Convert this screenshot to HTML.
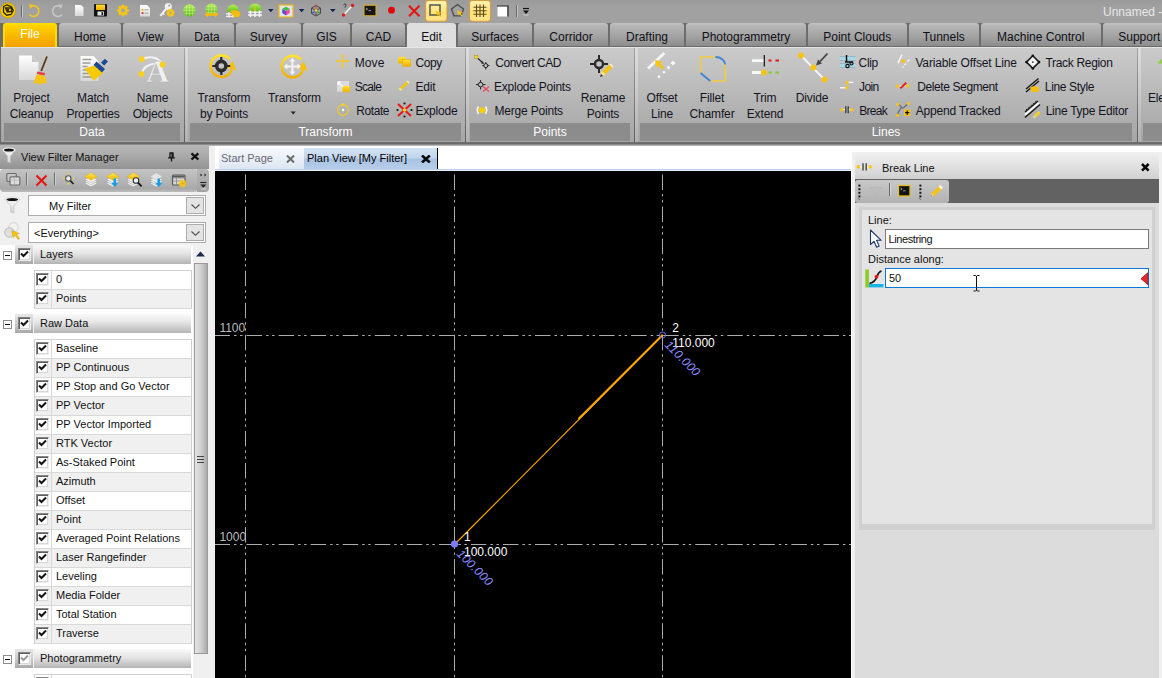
<!DOCTYPE html>
<html><head><meta charset="utf-8"><title>Break Line</title>
<style>
html,body{margin:0;padding:0;}
body{width:1162px;height:678px;overflow:hidden;position:relative;background:#a1a1a1;font-family:"Liberation Sans",sans-serif;font-size:12px;color:#111;}
.a{position:absolute;}
.t{position:absolute;white-space:nowrap;line-height:14px;}
/* title bar */
#title{left:0;top:0;width:1162px;height:23px;background:linear-gradient(#9a9a9a,#a1a1a1 35%,#a1a1a1);}
/* tab row */
#tabrow{left:0;top:23px;width:1162px;height:24px;background:#6c6c6c;}
.tab{position:absolute;top:23px;height:23px;background:linear-gradient(#c2c2c2,#b6b6b6 12%,#a2a2a2 60%,#8c8c8c);font-size:12px;line-height:28px;text-align:center;color:#101018;border-radius:3px 3px 0 0;white-space:nowrap;overflow:hidden;}
.tab.file{height:24px;box-sizing:border-box;background:linear-gradient(#ffd400,#f8b400 55%,#f3a000);color:#fff;border:2px solid #ffdc00;border-bottom:none;border-radius:3px 3px 0 0;line-height:19px;}
.tab.act{background:#dedede;height:24px;}
/* ribbon */
#ribbon{left:1px;top:47px;width:1161px;height:95px;background:linear-gradient(#cacaca,#c2c2c2 25%,#b0b0b0 70%,#a6a6a6);border-top:1px solid #e4e4e4;box-sizing:border-box;}
.gl{position:absolute;top:123px;height:18px;background:#8c8c8c;color:#fff;font-size:12px;line-height:19px;text-align:center;}
.gs{position:absolute;top:48px;height:94px;width:1px;background:linear-gradient(#a6a6a6,#868686 40%,#5e5e5e);}
.gs:after{content:"";position:absolute;left:1px;top:0;width:3px;height:100%;background:linear-gradient(rgba(255,255,255,.34),rgba(255,255,255,.14));}
.rb{position:absolute;letter-spacing:-.15px;font-size:12px;line-height:16px;text-align:center;white-space:nowrap;color:#14141e;}
.rs{position:absolute;font-size:12px;line-height:16px;white-space:nowrap;color:#14141e;}

#lp{left:0;top:145px;width:209px;height:533px;background:#f0f0f0;}
#lpt{left:0;top:145px;width:209px;height:24px;background:linear-gradient(#b8b8b8,#a8a8a8 50%,#929292);}
#lptb{left:0;top:169px;width:198px;height:23px;background:linear-gradient(#c4c4c4,#b2b2b2 60%,#a8a8a8 85%,#bcbcbc);border-radius:4px 4px 4px 4px;}
.cmb{font-size:11px;position:absolute;left:28px;width:176px;height:19px;border:1px solid #adadad;background:#fff;box-sizing:content-box;}
.cmb i{position:absolute;right:1px;top:1px;width:16px;height:15px;border:1px solid #adadad;background:#e4e4e4;}
.hd{position:absolute;left:15px;width:176px;height:19px;background:linear-gradient(#fafafa,#e4e4e4 45%,#b4b4b4);}
.hd:before{content:"";position:absolute;left:0;top:0;width:18px;height:100%;background:linear-gradient(#e8e8e8,#cfcfcf 45%,#a8a8a8);border-right:1px solid #f2f2f2;}
.hd b{font-size:11px;position:absolute;left:25px;top:2px;font-weight:normal;line-height:14px;}
.cb{position:absolute;width:11px;height:11px;border:1px solid #848484;border-right-color:#ececec;border-bottom-color:#ececec;background:#fff;box-shadow:inset 1px 1px 0 #5e5e5e,inset -1px -1px 0 #d8d8d8;}
.mn{position:absolute;left:3px;width:7px;height:7px;border:1px solid #8e8e8e;background:#fff;}
.mn:after{content:"";position:absolute;left:1px;top:3px;width:5px;height:1px;background:#111;}
.box{position:absolute;left:34px;width:156px;border:1px solid #d0d0d0;border-top:none;border-bottom:none;background:#fff;}
.row{position:relative;height:19px;box-sizing:border-box;border-bottom:1px solid #d8d8d8;}
.row:nth-child(even){background:#f0f0f0;}
.row:first-child{border-top:1px solid #d0d0d0;height:20px;}
.row s{position:absolute;left:16px;top:0;width:1px;height:19px;background:#d8d8d8;}
.row span{font-size:11px;position:absolute;left:21px;top:1px;line-height:14px;white-space:nowrap;}
.row .cb{left:1px;top:2px;}
.row:first-child span{top:1px;}
.row:first-child .cb{top:2px;}

#ctab{left:215px;top:145px;width:636px;height:27px;background:#fff;}
#cv{left:215px;top:171px;width:636px;height:507px;background:#000;}
.dt{position:absolute;top:148px;height:21px;font-size:11px;line-height:21px;white-space:nowrap;}
#rp{left:851px;top:152px;width:311px;height:526px;background:#f0f0f0;border-left:1px solid #fff;box-sizing:border-box;}
#rpi{left:855px;top:156px;width:304px;height:522px;background:#dcdcdc;}
.inp{position:absolute;left:885px;width:262px;height:18px;border:1px solid #7a7a7a;background:#fff;font-size:11px;line-height:18px;}
</style></head><body>
<div id="title" class="a"></div>
<div id="tabrow" class="a"></div>
<div id="ribbon" class="a"></div>
<div class="t" style="left:1103px;top:5px;color:#e8e8e8;font-size:12px">Unnamed -</div>
<div class="tab file" style="left:3px;width:54px">File</div>
<div class="tab" style="left:59px;width:62px">Home</div>
<div class="tab" style="left:123px;width:55px">View</div>
<div class="tab" style="left:180px;width:54px">Data</div>
<div class="tab" style="left:236px;width:65px">Survey</div>
<div class="tab" style="left:303px;width:47px">GIS</div>
<div class="tab" style="left:352px;width:53px">CAD</div>
<div class="tab act" style="left:407px;width:49px">Edit</div>
<div class="tab" style="left:458px;width:74px">Surfaces</div>
<div class="tab" style="left:534px;width:74px">Corridor</div>
<div class="tab" style="left:610px;width:74px">Drafting</div>
<div class="tab" style="left:686px;width:120px">Photogrammetry</div>
<div class="tab" style="left:808px;width:98.5px">Point Clouds</div>
<div class="tab" style="left:908.5px;width:70.5px">Tunnels</div>
<div class="tab" style="left:981px;width:119.5px">Machine Control</div>
<div class="tab" style="left:1102.5px;width:73.5px">Support</div>
<!--TABS-->
<div class="gl" style="left:4px;width:176px">Data</div>
<div class="gl" style="left:190px;width:271px">Transform</div>
<div class="gl" style="left:470px;width:160px">Points</div>
<div class="gl" style="left:640px;width:492px">Lines</div>
<div class="gl" style="left:1143px;width:27px"></div>
<div class="gs" style="left:184px"></div>
<div class="gs" style="left:465px"></div>
<div class="gs" style="left:634px"></div>
<div class="gs" style="left:1137px"></div>
<div class="rb" style="left:-18.5px;width:100px;top:90px">Project<br>Cleanup</div>
<div class="rb" style="left:43px;width:100px;top:90px">Match<br>Properties</div>
<div class="rb" style="left:102.5px;width:100px;top:90px">Name<br>Objects</div>
<div class="rb" style="left:174px;width:100px;top:90px">Transform<br>by Points</div>
<div class="rb" style="left:244.5px;width:100px;top:90px">Transform<br></div>
<div class="rb" style="left:553px;width:100px;top:90px">Rename<br>Points</div>
<div class="rb" style="left:612px;width:100px;top:90px">Offset<br>Line</div>
<div class="rb" style="left:662px;width:100px;top:90px">Fillet<br>Chamfer</div>
<div class="rb" style="left:715px;width:100px;top:90px">Trim<br>Extend</div>
<div class="rb" style="left:762px;width:100px;top:90px">Divide<br></div>
<div class="rb" style="left:1122px;width:100px;top:90px">Elevation<br></div>
<div class="rs" style="left:354.7px;top:55px;letter-spacing:0.10px">Move</div>
<div class="rs" style="left:354.7px;top:79px;letter-spacing:-0.70px">Scale</div>
<div class="rs" style="left:356.2px;top:103px;letter-spacing:-0.40px">Rotate</div>
<div class="rs" style="left:415.5px;top:55px;letter-spacing:-0.38px">Copy</div>
<div class="rs" style="left:415.5px;top:79px;letter-spacing:-0.22px">Edit</div>
<div class="rs" style="left:415.5px;top:103px;letter-spacing:-0.20px">Explode</div>
<div class="rs" style="left:495.2px;top:55px;letter-spacing:-0.45px">Convert CAD</div>
<div class="rs" style="left:494.0px;top:79px;letter-spacing:-0.24px">Explode Points</div>
<div class="rs" style="left:494.5px;top:103px;letter-spacing:-0.19px">Merge Points</div>
<div class="rs" style="left:858.6px;top:55px;letter-spacing:-0.35px">Clip</div>
<div class="rs" style="left:859.0px;top:79px;letter-spacing:-0.58px">Join</div>
<div class="rs" style="left:859.2px;top:103px;letter-spacing:-0.70px">Break</div>
<div class="rs" style="left:915.4px;top:55px;letter-spacing:-0.14px">Variable Offset Line</div>
<div class="rs" style="left:917.2px;top:79px;letter-spacing:-0.39px">Delete Segment</div>
<div class="rs" style="left:915.7px;top:103px;letter-spacing:-0.19px">Append Tracked</div>
<div class="rs" style="left:1045.5px;top:55px;letter-spacing:-0.32px">Track Region</div>
<div class="rs" style="left:1044.8px;top:79px;letter-spacing:-0.34px">Line Style</div>
<div class="rs" style="left:1045.7px;top:103px;letter-spacing:-0.26px">Line Type Editor</div>
<!--ICONS1--><svg class="a" style="left:0;top:0" width="1162" height="145" viewBox="0 0 1162 145"><defs>
<linearGradient id="gy" x1="0" y1="0" x2="0" y2="1"><stop offset="0" stop-color="#ffe030"/><stop offset="1" stop-color="#f0b000"/></linearGradient>
<linearGradient id="gw" x1="0" y1="0" x2="0" y2="1"><stop offset="0" stop-color="#ffffff"/><stop offset="1" stop-color="#d8d8d8"/></linearGradient>
<linearGradient id="gg" x1="0" y1="0" x2="0" y2="1"><stop offset="0" stop-color="#b4ee5a"/><stop offset="1" stop-color="#5cb81c"/></linearGradient>
<linearGradient id="gh" x1="0" y1="0" x2="0" y2="1"><stop offset="0" stop-color="#fff2b0"/><stop offset=".6" stop-color="#ffe278"/><stop offset="1" stop-color="#ffe68c"/></linearGradient>
</defs><circle cx="8" cy="10.5" r="7.6" fill="#f7cc00"/><circle cx="8" cy="10.5" r="7.6" fill="none" stroke="#c89a00" stroke-width=".8"/><path d="M3.5 6.5L7 5l4.5 1.8 1.8 3.7-2.2 3.8-4.4.9-3.2-2.9zM5.5 8l1.8 4 4-.6.4-3.5z" fill="none" stroke="#2a2410" stroke-width="1.3"/><circle cx="8" cy="10" r="1.2" fill="#2a2410"/><path d="M21.5 5V17" stroke="#6a6a6a"/><path d="M22.5 5V17" stroke="#c4c4c4"/><path d="M31.5 6.2A5.3 5.3 0 1 1 29.5 14.5" fill="none" stroke="#f1c420" stroke-width="1.7"/><path d="M28.6 4.2L33.4 4.8 30.6 9z" fill="#f1c420"/><path d="M60 6.2A5.3 5.3 0 1 0 62 14.5" fill="none" stroke="#c6c6c6" stroke-width="1.7"/><path d="M62.9 4.2L58.1 4.8 60.9 9z" fill="#c6c6c6"/><path d="M75 5h6l2.5 2.5V16H75z" fill="url(#gw)"/><rect x="94" y="4" width="13" height="12.5" rx="1" fill="#111"/><rect x="96" y="4.5" width="9" height="5.5" fill="url(#gy)"/><rect x="97.5" y="11.5" width="6.5" height="4" fill="#e8e8e8"/><rect x="101.5" y="12.2" width="1.6" height="2.8" fill="#111"/><g transform="translate(123 10.5)"><rect x="-1.3" y="-5.800000000000001" width="2.6" height="3" fill="#f4c518" transform="rotate(0)"/><rect x="-1.3" y="-5.800000000000001" width="2.6" height="3" fill="#f4c518" transform="rotate(45)"/><rect x="-1.3" y="-5.800000000000001" width="2.6" height="3" fill="#f4c518" transform="rotate(90)"/><rect x="-1.3" y="-5.800000000000001" width="2.6" height="3" fill="#f4c518" transform="rotate(135)"/><rect x="-1.3" y="-5.800000000000001" width="2.6" height="3" fill="#f4c518" transform="rotate(180)"/><rect x="-1.3" y="-5.800000000000001" width="2.6" height="3" fill="#f4c518" transform="rotate(225)"/><rect x="-1.3" y="-5.800000000000001" width="2.6" height="3" fill="#f4c518" transform="rotate(270)"/><rect x="-1.3" y="-5.800000000000001" width="2.6" height="3" fill="#f4c518" transform="rotate(315)"/><circle r="4.4" fill="#f4c518"/><circle r="1.9" fill="#a4a4a4"/></g><path d="M140 5h7l3 3V16.5H140z" fill="url(#gw)"/><rect x="141.5" y="9" width="2" height="1.6" fill="#e8b400"/><rect x="141.5" y="12.3" width="2" height="1.6" fill="#d02020"/><path d="M144.5 9.8h4M144.5 13.1h4" stroke="#9a9a9a" stroke-width=".9"/><circle cx="168.3" cy="6.6" r="3.6" fill="#f0f0f0"/><circle cx="169.3" cy="5.6" r="1.1" fill="#a0a0a0"/><path d="M166 9L160.3 15.8" stroke="#f0f0f0" stroke-width="2"/><path d="M162.500 13.200l1.800 1.600" stroke="#f0f0f0" stroke-width="1.500"/><g transform="translate(170.5 12.8)"><rect x="-1.3" y="-3.9" width="2.6" height="3" fill="#f4c518" transform="rotate(0)"/><rect x="-1.3" y="-3.9" width="2.6" height="3" fill="#f4c518" transform="rotate(45)"/><rect x="-1.3" y="-3.9" width="2.6" height="3" fill="#f4c518" transform="rotate(90)"/><rect x="-1.3" y="-3.9" width="2.6" height="3" fill="#f4c518" transform="rotate(135)"/><rect x="-1.3" y="-3.9" width="2.6" height="3" fill="#f4c518" transform="rotate(180)"/><rect x="-1.3" y="-3.9" width="2.6" height="3" fill="#f4c518" transform="rotate(225)"/><rect x="-1.3" y="-3.9" width="2.6" height="3" fill="#f4c518" transform="rotate(270)"/><rect x="-1.3" y="-3.9" width="2.6" height="3" fill="#f4c518" transform="rotate(315)"/><circle r="2.5" fill="#f4c518"/><circle r="1.1" fill="#a4a4a4"/></g><circle cx="189.5" cy="10.5" r="6.2" fill="url(#gg)"/><path d="M183.3 10.5h12.4M184.3 7.5h10.4M184.3 13.5h10.4M189.5 4.3v12.4M186.5 5.3v10.4M192.5 5.3v10.4" stroke="#d4f59a" stroke-width=".6" stroke-opacity=".7" fill="none"/><circle cx="211.5" cy="9.5" r="6" fill="url(#gg)"/><path d="M205.5 9.5h12M206.5 6.5h10M206.5 12.5h10M211.5 3.5v12M208.5 4.5v10M214.5 4.5v10" stroke="#d4f59a" stroke-width=".6" stroke-opacity=".7" fill="none"/><path d="M204.5 14.5l3.5-3v1.8h7v-1.8l3.5 3-3.5 3v-1.8h-7v1.8z" fill="#f4bc10"/><path d="M227 10.500a6 6 0 0 1 12 0a6 2.500 0 0 1-12 0z" fill="url(#gg)"/><path d="M226 13.800h14M226 16.300h8" stroke="#f4f4f4" stroke-width="1.200"/><path d="M229 12v5.500M233 12.500v5" stroke="#f0f0f0" stroke-width="1.200"/><path d="M231 10.200h5l3.500 1.500 1 2.300-.8 2.500-2.200.8h-3.500l-1-1.500 1-.9h-2l-.8-1.200.8-1.100h-2z" fill="#f4bc10"/><path d="M248.5 9.5a6.5 6 0 0 1 13 0a6.5 2.5 0 0 1-13 0z" fill="url(#gg)"/><path d="M255 7v6" stroke="#e8c020" stroke-width="1.4"/><path d="M248 12.2h14M248 15h14" stroke="#f6f6f6" stroke-width="1.3"/><path d="M250.5 10.5v6.5M255 11.5v5.5M259.5 10.5v6.5" stroke="#f6f6f6" stroke-width="1.5"/><path d="M268 9h5.6l-2.8 3.2z" fill="#14224e"/><rect x="279" y="5" width="14" height="12" fill="#e4e4e4" stroke="#e9b820" stroke-width="1.2"/><path d="M286 11V15.5L282.3 13V8.8z" fill="#5a48c8"/><path d="M286 11V15.5L289.7 13V8.8z" fill="#f048a8"/><path d="M286 11L282.3 8.8 286 6.8 289.7 8.8z" fill="#40c040"/><path d="M298.8 9h5.6l-2.8 3.2z" fill="#14224e"/><path d="M316 5.5l4.5 2.5v5.5l-4.5 2.5-4.5-2.5v-5.5zM316 10.5v5.5M311.5 8l4.5 2.5 4.5-2.5" fill="none" stroke="#4a4a4a" stroke-width="1"/><path d="M316 4.5v6" stroke="#e04040" stroke-width="1.2"/><path d="M316 10.5l-4 3" stroke="#4848d8" stroke-width="1.2"/><path d="M316 10.5l4 3" stroke="#30a030" stroke-width="1.2"/><rect x="314.8" y="9.3" width="2.4" height="2.4" fill="#f0d040"/><path d="M330 9h5.6l-2.8 3.2z" fill="#14224e"/><path d="M343.5 15L352.5 5.5" stroke="#f4f4f4" stroke-width="1.5"/><circle cx="343.5" cy="15" r="1.7" fill="#e01818"/><circle cx="352.5" cy="5.5" r="1.7" fill="#e01818"/><path d="M343.6 5.2c.2-1.6 2.6-1.6 2.5 0 0 1-1.2 1.2-1.2 2.4M344.9 9v.1" stroke="#333" stroke-width="1" fill="none"/><rect x="364" y="5.2" width="12" height="10.6" fill="#161616" stroke="#d8b020" stroke-width="1.1"/><path d="M366 8l1.5 1-1.5 1M368.5 10.6h2.5" stroke="#bbb" stroke-width=".8" fill="none"/><circle cx="391.5" cy="10.2" r="3.4" fill="#e00808"/><path d="M409 5.8L419.5 16.2M419.5 5.8L409 16.2" stroke="#e41414" stroke-width="2.1"/><rect x="425.5" y="0.500" width="21.5" height="20.800" rx="2.800" fill="url(#gh)" stroke="#d69c3c" stroke-width="1.100"/><rect x="469.5" y="0.500" width="21" height="20.800" rx="2.800" fill="url(#gh)" stroke="#d69c3c" stroke-width="1.100"/><rect x="430" y="5" width="10" height="10" fill="none" stroke="#4a4a4a" stroke-width="1.4"/><path d="M436 11l5.5 1.8-2 1 1.6 2.2-1 .7-1.6-2.2-1.4 1.6z" fill="#f4c010"/><path d="M457.5 4.5l6 4.5-2.4 6.8h-7.2l-2.4-6.8z" fill="none" stroke="#4a4a4a" stroke-width="1.3"/><path d="M457 10.5l6 1.8-2.2 1 1.6 2.4-1 .7-1.6-2.4-1.5 1.6z" fill="#f4c010"/><path d="M476.5 4.5v12.5M480 4.5v12.5M483.5 4.5v12.5M473.5 7.2h13M473.5 10.7h13M473.5 14.2h13" stroke="#5e4c1c" stroke-width="1.1"/><rect x="497.5" y="6" width="10" height="10.5" fill="#fff"/><path d="M497 6h11v10.5" fill="none" stroke="#222" stroke-width="1.200"/><path d="M516.5 5V17" stroke="#6a6a6a"/><path d="M517.5 5V17" stroke="#c4c4c4"/><path d="M523 8.5h6" stroke="#111" stroke-width="1.2"/><path d="M523 10.5h6l-3 3.6z" fill="#111"/><path d="M523.5 15h5" stroke="#ddd" stroke-width=".8"/><path d="M19 55.5h13l6.5 6.5V80H19z" fill="url(#gw)"/><path d="M32 55.5v6.5h6.5z" fill="#c8c8c8"/><path d="M47 56.5L41.2 71" stroke="#5a3818" stroke-width="1.8"/><path d="M37.5 71.5l7.5 1.5-.5 2.5-7.8-1.4z" fill="#e84040"/><path d="M36.5 74.5l8.5 1.5 2 7.5-2-.8-1.2 1.4-1.6-1.2-1.6 1.6-1.4-1.6-2 1.4-.8-1.6-3 1z" fill="#f4c418"/><path d="M80.5 56h13l5 5V81H80.5z" fill="url(#gw)"/><path d="M82.5 59.500h9M82.500 63h8M82.500 66.500h5M82.500 70h4M82.500 73.500h6M82.500 77h12" stroke="#9c9c9c" stroke-width="1.6"/><path d="M84.400 68.500L94.500 65.400 103 73 93.700 80.800z" fill="#f8c800"/><path d="M93.500 65l3-3.500 8.500 7.500-3 3.500z" fill="#1c4a90"/><path d="M101 62.800l3.800-4 3.200 2.800-3.800 4z" fill="#1c4a90"/><path d="M141.700 59.200C150 55.500 158 57 162.600 64.600M141.300 73.900C143.500 67 149 63.800 156 63.500" fill="none" stroke="#f2f2f2" stroke-width="2.2"/><text x="146" y="82.300" style="font-family:'Liberation Serif',serif;font-size:32px;font-weight:bold" fill="#f0f0f0" stroke="#a8a8a8" stroke-width=".4">A</text><circle cx="141.700" cy="59.200" r="3" fill="#f8d020"/><circle cx="162.600" cy="64.600" r="3" fill="#f8d020"/><circle cx="141.300" cy="73.900" r="3" fill="#f8d020"/><path d="M229.9 59.4A10.800 10.800 0 1 0 232.0 68.5" fill="none" stroke="url(#gy)" stroke-width="2.600"/><path d="M226.8 67.5L232.8 61L236.3 70.5z" fill="#f6c010"/><circle cx="221.3" cy="66" r="4.600" fill="none" stroke="#2c2c2c" stroke-width="3.600"/><path d="M212.3 66h5M225.3 66h5M221.3 57v5M221.3 70v5" stroke="#2c2c2c" stroke-width="2.200"/><path d="M301.0 59.9A10.800 10.800 0 1 0 303.09999999999997 69.0" fill="none" stroke="url(#gy)" stroke-width="2.600"/><path d="M297.9 68.0L303.9 61.5L307.4 71.0z" fill="#f6c010"/><path d="M283.9 66.5l3.500-3v2h4v-4h-2l3-3.500 3 3.500h-2v4h4v-2l3.500 3-3.500 3v-2h-4v4h2l-3 3.500-3-3.500h2v-4h-4v2z" fill="#f4f4f4"/><path d="M290.700 111.500h5l-2.500 3z" fill="#222"/><path d="M336.500 61h12M342.500 55v12" stroke="#f0c830" stroke-width="1.300"/><path d="M342.500 54l2 2.600h-4zM342.500 68l2-2.600h-4zM335.500 61l2.600-2v4zM349.500 61l-2.600-2v4z" fill="#f0c830"/><circle cx="342.500" cy="61" r="1.600" fill="#f0c830"/><rect x="336.500" y="80.500" width="13" height="11.500" fill="#dcdcdc" stroke="#b8b8b8" stroke-width=".8"/><rect x="342.500" y="86" width="7.300" height="6.200" fill="url(#gy)"/><path d="M338 82l4.500 4.500M338 82v3M338 82h3" stroke="#fff" stroke-width="1.200" fill="none"/><circle cx="343" cy="110" r="5.300" fill="none" stroke="#ecc830" stroke-width="1.300"/><circle cx="343" cy="104.500" r="1.500" fill="#f4d030"/><circle cx="343" cy="110" r="1.200" fill="#fff"/><rect x="398" y="57" width="8" height="6.500" fill="url(#gy)"/><rect x="402.500" y="59.700" width="8.200" height="6.600" fill="url(#gy)" stroke="#e0a800" stroke-width=".5"/><path d="M399.5 90L408.5 81.5" stroke="#f2c418" stroke-width="3"/><path d="M399.5 90L401.12 88.47" stroke="#f0e0a0" stroke-width="3"/><path d="M407.6 82.35L408.5 81.5" stroke="#f4f4f4" stroke-width="3"/><path d="M398 104L411 116M411 104L398 116" stroke="#e81818" stroke-width="2"/><circle cx="404.500" cy="110" r="1.800" fill="#f8d020"/><circle cx="404.500" cy="103.500" r="1.100" fill="#111"/><circle cx="404.500" cy="116.500" r="1.100" fill="#111"/><circle cx="397.500" cy="110" r="1.100" fill="#111"/><circle cx="411.500" cy="110" r="1.100" fill="#111"/><rect x="474.700" y="55.300" width="3.200" height="3.200" fill="#f8d820" stroke="#b09000" stroke-width=".5"/><path d="M478 58.500l5 4.500" stroke="#222" stroke-width="1.100"/><path d="M484 64l-3.200-.8 2-2z" fill="#222"/><circle cx="485.800" cy="65.600" r="2" fill="none" stroke="#222" stroke-width="1"/><path d="M485.800 62v2M485.800 67.500v2M482.300 65.600h2M487.500 65.600h2" stroke="#222" stroke-width="1"/><circle cx="480.600" cy="84.600" r="2.300" fill="none" stroke="#222" stroke-width="1"/><path d="M480.600 80v2.500M480.600 87v2.500M476 84.600h2.500M483 84.600h2.500" stroke="#222" stroke-width="1"/><path d="M483 86.500l6 5M489 86.500l-6 5" stroke="#e85060" stroke-width="1.600"/><ellipse cx="482" cy="110.200" rx="3.500" ry="3" fill="#f8cc10"/><path d="M478.500 106.500q-2.500 3.700 0 7.400M485.500 106.500q2.500 3.700 0 7.400" fill="none" stroke="#f8f8f8" stroke-width="1.500"/><circle cx="599" cy="64" r="4" fill="none" stroke="#2a2a2a" stroke-width="2.400"/><path d="M590 64h4.500M603.500 64h4.500M599 55v4.500M599 68.500v4.500" stroke="#2a2a2a" stroke-width="2"/><path d="M602 74.5L612 65" stroke="#f2c418" stroke-width="4.2"/><path d="M602 74.5L603.8 72.79" stroke="#f0e0a0" stroke-width="4.2"/><path d="M611.0 65.95L612 65" stroke="#f4f4f4" stroke-width="4.2"/><path d="M600 77l1-3 2 2z" fill="#333"/><path d="M648 68.400L664.400 52.900" stroke="#f6f6f6" stroke-width="2.800"/><path d="M655 60l7.500 1.500-2.200 2 3.700 4-2 2-3.700-4-2 2.200z" fill="#f6c414"/><path d="M673 60.400l2.500 2.500-2.500 2.500-2.500-2.500zM668.500 65.500l2 2-2 2-2-2zM664 70.500l1.600 1.600-1.600 1.600-1.600-1.600zM659 75l1.800 1.800-1.800 1.800-1.800-1.800z" fill="#f8f8f8"/><path d="M700.500 73V57h15M725.300 64.500V81h-15" fill="none" stroke="#f2cc40" stroke-width="1.600"/><path d="M715.500 57a9.800 8 0 0 1 9.800 7.500" fill="none" stroke="#3c84d8" stroke-width="1.800"/><path d="M700.500 73l9.800 8" stroke="#3c84d8" stroke-width="1.800"/><path d="M752 60.600h12M752 72.500h10" stroke="#f8f8f8" stroke-width="2.800"/><path d="M764.300 55v11.500" stroke="#111" stroke-width="1.200"/><path d="M768.500 60.600h3M775.500 60.600h3.500" stroke="#e81818" stroke-width="2"/><path d="M768.500 72.500h3M775.500 72.500h3.500" stroke="#7ccc28" stroke-width="2"/><circle cx="764" cy="72.500" r="3" fill="#f6c414"/><path d="M801 55.500L824.500 79.600" stroke="#f8f8f8" stroke-width="1.800"/><circle cx="801" cy="55.500" r="3" fill="#f6c414"/><circle cx="813.300" cy="67.500" r="3" fill="#f6c414"/><circle cx="824.500" cy="79.600" r="3" fill="#f6c414"/><path d="M827.500 53.500l-7.500 8" stroke="#444" stroke-width="1.800"/><path d="M816 65.500l2-6 4 4z" fill="#444"/><path d="M840 58.500h15.500M840 65.500h15.500" stroke="#a4dcec" stroke-width="2.600"/><path d="M840 56.500h15.500M840 60.600h15.500M840 63.500h15.500M840 67.500h15.500" stroke="#6cb4cc" stroke-width=".6"/><path d="M846.500 55v7M845 62h8" stroke="#111" stroke-width="1.500"/><circle cx="847.500" cy="66" r="1.700" fill="none" stroke="#111" stroke-width="1.200"/><circle cx="851.500" cy="63.500" r="1.500" fill="none" stroke="#111" stroke-width="1.100"/><path d="M847 82.400h6.500M840 87.800h7" stroke="#f6f6f6" stroke-width="1.400"/><path d="M847 82.400v5.400" stroke="#e8c840" stroke-width="1"/><circle cx="847" cy="82.400" r="1.700" fill="#f6c414"/><circle cx="847" cy="87.800" r="1.700" fill="#f6c414"/><path d="M842 109.700h3M849 109.700h3" stroke="#f4f4f4" stroke-width="1.300"/><path d="M845.800 106.200v7M848.200 106.200v7" stroke="#333" stroke-width="1.200"/><circle cx="841.900" cy="109.700" r="1.800" fill="#f6c414"/><circle cx="851.900" cy="109.700" r="1.800" fill="#f6c414"/><path d="M901.800 54.600L898 63.400" stroke="#f6f6f6" stroke-width="1.500"/><rect x="901.500" y="59.500" width="3.400" height="3.400" fill="#f6c414"/><path d="M909.500 59.500l-2 2M906 63.500l-1.500 1.500M903.500 66.500l-1 1" stroke="#f4f4f4" stroke-width="1.600"/><path d="M897.400 86h10.300" stroke="#e8e8e8" stroke-width="1"/><path d="M900.400 88.400L906.200 82.800" stroke="#e02020" stroke-width="2"/><circle cx="897.400" cy="86" r="1.800" fill="#f6c414"/><circle cx="907.700" cy="86" r="1.800" fill="#f6c414"/><path d="M897.700 104.300c6 1 1 8 10.700-.7M897.400 115.300c1-5 3-6 4-8" fill="none" stroke="#707070" stroke-width="1.300"/><circle cx="897.700" cy="104.300" r="1.600" fill="#f6c414"/><circle cx="908.400" cy="103.600" r="1.600" fill="#f6c414"/><circle cx="897.400" cy="115.300" r="1.600" fill="#f6c414"/><rect x="904" y="109.500" width="6.400" height="6.400" fill="#f6c414"/><path d="M907.200 110.500v4.400M905 112.700h4.400" stroke="#111" stroke-width="1.200"/><path d="M1032.800 55.800l6.300 6.300-6.300 6.300-6.300-6.300z" fill="#f4f4f4" stroke="#1c1c1c" stroke-width="1.600" stroke-linejoin="round"/><circle cx="1032.800" cy="55.800" r="1.300" fill="#111"/><circle cx="1039.100" cy="62.100" r="1.300" fill="#111"/><circle cx="1032.800" cy="68.400" r="1.300" fill="#111"/><circle cx="1026.500" cy="62.100" r="1.300" fill="#111"/><circle cx="1032.800" cy="62.100" r=".9" fill="#333"/><path d="M1026 89L1038.500 78.500M1026 92L1039 81" stroke="#1c1c1c" stroke-width="1.500"/><path d="M1030 87.500l4-1.500 5 1.500v3.500l-1.500 1h-5l-1.500-1.500z" fill="#f6c010"/><path d="M1025 112L1038 101M1025 117.500L1040 104.500" stroke="#1c1c1c" stroke-width="1.600"/><path d="M1025 114.800L1039 102.800" stroke="#f8f8f8" stroke-width="1.800"/><path d="M1026 110L1037 100.500" stroke="#1c1c1c" stroke-width="1" stroke-dasharray="1.500 1.500"/><path d="M1034.500 116.500l5-4.500" stroke="#f4d020" stroke-width="3"/><path d="M1033 118l1-2.200 1.400 1.400z" fill="#eee"/><path d="M1157.500 63.500l4.500-5v5z" fill="#8cd030"/></svg><!--/ICONS1-->
<!--RIBBON-->
<div id="lp" class="a"></div><div class="a" style="left:0;top:245px;width:193px;height:433px;background:#fff"></div><div id="lpt" class="a"></div><div id="lptb" class="a"></div><div class="a" style="left:197px;top:169px;width:12px;height:23px;background:linear-gradient(#b4b4b4,#a2a2a2);border-radius:0 4px 4px 0"></div>
<div class="a" style="left:209px;top:145px;width:6px;height:533px;background:#f0f0f0"></div>
<div class="t" style="left:21px;top:150px;font-size:11px">View Filter Manager</div>
<div class="cmb" style="top:195px"><i></i><div class="t" style="left:20px;top:3px">My Filter</div></div>
<div class="cmb" style="top:222px"><i></i><div class="t" style="left:5px;top:3px">&lt;Everything&gt;</div></div>
<div class="mn" style="top:251px"></div><div class="hd" style="top:245px"><div class="cb" style="left:3px;top:3px"><svg class="a" style="left:1px;top:1px" width="9" height="9" viewBox="0 0 9 9"><path d="M1 3.5 L3.5 6 L8 1.5" stroke="#111" stroke-width="2" fill="none"/></svg></div><b>Layers</b></div>
<div class="box" style="top:270px"><div class="row"><div class="cb"><svg class="a" style="left:1px;top:1px" width="9" height="9" viewBox="0 0 9 9"><path d="M1 3.5 L3.5 6 L8 1.5" stroke="#111" stroke-width="2" fill="none"/></svg></div><s></s><span>0</span></div><div class="row"><div class="cb"><svg class="a" style="left:1px;top:1px" width="9" height="9" viewBox="0 0 9 9"><path d="M1 3.5 L3.5 6 L8 1.5" stroke="#111" stroke-width="2" fill="none"/></svg></div><s></s><span>Points</span></div></div>
<div class="mn" style="top:320px"></div><div class="hd" style="top:314px"><div class="cb" style="left:3px;top:3px"><svg class="a" style="left:1px;top:1px" width="9" height="9" viewBox="0 0 9 9"><path d="M1 3.5 L3.5 6 L8 1.5" stroke="#111" stroke-width="2" fill="none"/></svg></div><b>Raw Data</b></div>
<div class="box" style="top:339px"><div class="row"><div class="cb"><svg class="a" style="left:1px;top:1px" width="9" height="9" viewBox="0 0 9 9"><path d="M1 3.5 L3.5 6 L8 1.5" stroke="#111" stroke-width="2" fill="none"/></svg></div><s></s><span>Baseline</span></div><div class="row"><div class="cb"><svg class="a" style="left:1px;top:1px" width="9" height="9" viewBox="0 0 9 9"><path d="M1 3.5 L3.5 6 L8 1.5" stroke="#111" stroke-width="2" fill="none"/></svg></div><s></s><span>PP Continuous</span></div><div class="row"><div class="cb"><svg class="a" style="left:1px;top:1px" width="9" height="9" viewBox="0 0 9 9"><path d="M1 3.5 L3.5 6 L8 1.5" stroke="#111" stroke-width="2" fill="none"/></svg></div><s></s><span>PP Stop and Go Vector</span></div><div class="row"><div class="cb"><svg class="a" style="left:1px;top:1px" width="9" height="9" viewBox="0 0 9 9"><path d="M1 3.5 L3.5 6 L8 1.5" stroke="#111" stroke-width="2" fill="none"/></svg></div><s></s><span>PP Vector</span></div><div class="row"><div class="cb"><svg class="a" style="left:1px;top:1px" width="9" height="9" viewBox="0 0 9 9"><path d="M1 3.5 L3.5 6 L8 1.5" stroke="#111" stroke-width="2" fill="none"/></svg></div><s></s><span>PP Vector Imported</span></div><div class="row"><div class="cb"><svg class="a" style="left:1px;top:1px" width="9" height="9" viewBox="0 0 9 9"><path d="M1 3.5 L3.5 6 L8 1.5" stroke="#111" stroke-width="2" fill="none"/></svg></div><s></s><span>RTK Vector</span></div><div class="row"><div class="cb"><svg class="a" style="left:1px;top:1px" width="9" height="9" viewBox="0 0 9 9"><path d="M1 3.5 L3.5 6 L8 1.5" stroke="#111" stroke-width="2" fill="none"/></svg></div><s></s><span>As-Staked Point</span></div><div class="row"><div class="cb"><svg class="a" style="left:1px;top:1px" width="9" height="9" viewBox="0 0 9 9"><path d="M1 3.5 L3.5 6 L8 1.5" stroke="#111" stroke-width="2" fill="none"/></svg></div><s></s><span>Azimuth</span></div><div class="row"><div class="cb"><svg class="a" style="left:1px;top:1px" width="9" height="9" viewBox="0 0 9 9"><path d="M1 3.5 L3.5 6 L8 1.5" stroke="#111" stroke-width="2" fill="none"/></svg></div><s></s><span>Offset</span></div><div class="row"><div class="cb"><svg class="a" style="left:1px;top:1px" width="9" height="9" viewBox="0 0 9 9"><path d="M1 3.5 L3.5 6 L8 1.5" stroke="#111" stroke-width="2" fill="none"/></svg></div><s></s><span>Point</span></div><div class="row"><div class="cb"><svg class="a" style="left:1px;top:1px" width="9" height="9" viewBox="0 0 9 9"><path d="M1 3.5 L3.5 6 L8 1.5" stroke="#111" stroke-width="2" fill="none"/></svg></div><s></s><span>Averaged Point Relations</span></div><div class="row"><div class="cb"><svg class="a" style="left:1px;top:1px" width="9" height="9" viewBox="0 0 9 9"><path d="M1 3.5 L3.5 6 L8 1.5" stroke="#111" stroke-width="2" fill="none"/></svg></div><s></s><span>Laser Rangefinder</span></div><div class="row"><div class="cb"><svg class="a" style="left:1px;top:1px" width="9" height="9" viewBox="0 0 9 9"><path d="M1 3.5 L3.5 6 L8 1.5" stroke="#111" stroke-width="2" fill="none"/></svg></div><s></s><span>Leveling</span></div><div class="row"><div class="cb"><svg class="a" style="left:1px;top:1px" width="9" height="9" viewBox="0 0 9 9"><path d="M1 3.5 L3.5 6 L8 1.5" stroke="#111" stroke-width="2" fill="none"/></svg></div><s></s><span>Media Folder</span></div><div class="row"><div class="cb"><svg class="a" style="left:1px;top:1px" width="9" height="9" viewBox="0 0 9 9"><path d="M1 3.5 L3.5 6 L8 1.5" stroke="#111" stroke-width="2" fill="none"/></svg></div><s></s><span>Total Station</span></div><div class="row"><div class="cb"><svg class="a" style="left:1px;top:1px" width="9" height="9" viewBox="0 0 9 9"><path d="M1 3.5 L3.5 6 L8 1.5" stroke="#111" stroke-width="2" fill="none"/></svg></div><s></s><span>Traverse</span></div></div>
<div class="mn" style="top:655px"></div><div class="hd" style="top:649px"><div class="cb" style="left:3px;top:3px"><svg class="a" style="left:1px;top:1px" width="9" height="9" viewBox="0 0 9 9"><path d="M1 3.5 L3.5 6 L8 1.5" stroke="#999" stroke-width="2" fill="none"/></svg></div><b>Photogrammetry</b></div>
<div class="box" style="top:674px"><div class="row"><div class="cb"><svg class="a" style="left:1px;top:1px" width="9" height="9" viewBox="0 0 9 9"><path d="M1 3.5 L3.5 6 L8 1.5" stroke="#111" stroke-width="2" fill="none"/></svg></div><s></s><span>&nbsp;</span></div></div>
<div class="a" style="left:193px;top:245px;width:16px;height:433px;background:#f0f0f0"></div>
<div class="a" style="left:194px;top:263px;width:14px;height:391px;box-sizing:border-box;border:1px solid #9a9a9a;background:linear-gradient(90deg,#e4e4e4,#cfcfcf 50%,#ababab)"></div>
<svg class="a" style="left:196px;top:251px" width="9" height="6"><path d="M0 5.5 L4.5 0.5 L9 5.5Z" fill="#1b2a4a"/></svg>
<svg class="a" style="left:197px;top:456px" width="7" height="7"><path d="M0 .5H7M0 3.5H7M0 6.5H7" stroke="#444" stroke-width="1"/></svg>
<!--ICONS3--><svg class="a" style="left:0;top:145px" width="215" height="100" viewBox="0 145 215 100"><defs><linearGradient id="fy" x1="0" y1="0" x2="0" y2="1"><stop offset="0" stop-color="#ffe45a"/><stop offset="1" stop-color="#f2b600"/></linearGradient>
<linearGradient id="fw" x1="0" y1="0" x2="0" y2="1"><stop offset="0" stop-color="#ffffff"/><stop offset="1" stop-color="#d0d0d0"/></linearGradient></defs><path d="M2.5 150.0L7.4 156.025V162.0l3.2 1V156.025L15.5 150.0z" fill="url(#fw)" stroke="#b8b8b8" stroke-width=".6"/><ellipse cx="9.0" cy="150.0" rx="6.5" ry="2.4" fill="#fafafa" stroke="#c8c8c8" stroke-width=".5"/><ellipse cx="9.0" cy="150.1" rx="4.9" ry="1.5" fill="#111"/><path d="M4.8 199.5L10.700000000000001 205.8V212l3.2 1V205.8L19.8 199.5z" fill="url(#fw)" stroke="#b8b8b8" stroke-width=".6"/><ellipse cx="12.3" cy="199.5" rx="7.5" ry="2.4" fill="#fafafa" stroke="#c8c8c8" stroke-width=".5"/><ellipse cx="12.3" cy="199.6" rx="5.9" ry="1.5" fill="#111"/><path d="M169.500 153h4M170 153v4.500M173 153v4.500M168.200 157.800h6.600M171.500 158v3.500" stroke="#111" stroke-width="1.300" fill="none"/><path d="M172.300 153.500v4" stroke="#111" stroke-width="1.600"/><path d="M191.500 153.300l6.800 6.200M198.300 153.300l-6.800 6.200" stroke="#111" stroke-width="2.300"/><rect x="6.800" y="173.500" width="9.500" height="8" rx="1" fill="#c8c8c8" stroke="#6c6c6c" stroke-width="1.200"/><rect x="10" y="176.800" width="9.800" height="8.200" rx="1" fill="#dcdcdc" stroke="#6c6c6c" stroke-width="1.200"/><path d="M10.500 180h9M14.500 177.500v7" stroke="#b4b4b4" stroke-width=".8"/><path d="M26.500 172.500v13M54.500 172.500v13" stroke="#707070" stroke-width="1"/><path d="M27.500 172.500v13M55.500 172.500v13" stroke="#cfcfcf" stroke-width="1"/><path d="M36.500 175.500l10 10M46.500 175.500l-10 10" stroke="#e41414" stroke-width="2.100"/><circle cx="68.300" cy="178.500" r="2.700" fill="#e8e8e8" stroke="#555" stroke-width="1.100"/><path d="M70.300 180.700l3.200 3.300" stroke="#222" stroke-width="1.700"/><path d="M68.300 172.300l1.600 2h-3.200zM68.300 185.300l1.600-2h-3.200zM62.500 178.500l2-1.600v3.200zM74.500 178.500l-2-1.600v3.200z" fill="#f0cc30"/><path d="M84.7 183.5l6.300-3.300 6.300 3.300-6.300 3.300z" fill="#f4f4f4" stroke="#a8a8a8" stroke-width=".6"/><path d="M84.7 181.5l6.300-3.300 6.300 3.300-6.300 3.300z" fill="#f4f4f4" stroke="#a8a8a8" stroke-width=".6"/><path d="M84.7 179.5l6.300-3.300 6.300 3.300-6.300 3.300z" fill="#f4f4f4" stroke="#a8a8a8" stroke-width=".6"/><path d="M84.7 176.5l6.300-3.800 6.300 3.800-6.300 3.800z" fill="url(#fy)" stroke="#d8a800" stroke-width=".4"/><path d="M106.5 183.5l6.300-3.300 6.300 3.300-6.300 3.300z" fill="#f4f4f4" stroke="#a8a8a8" stroke-width=".6"/><path d="M106.5 181.5l6.300-3.300 6.300 3.300-6.300 3.300z" fill="#f4f4f4" stroke="#a8a8a8" stroke-width=".6"/><path d="M106.5 179.5l6.300-3.300 6.300 3.300-6.300 3.300z" fill="#f4f4f4" stroke="#a8a8a8" stroke-width=".6"/><path d="M106.5 176.5l6.300-3.800 6.300 3.800-6.300 3.800z" fill="url(#fy)" stroke="#d8a800" stroke-width=".4"/><path d="M113.5 178.5v4.500h-2.300l3.600 4 3.600-4h-2.300v-4.500z" fill="#1a9ce8"/><path d="M127 183.5l6.300-3.300 6.300 3.300-6.300 3.300z" fill="#f4f4f4" stroke="#a8a8a8" stroke-width=".6"/><path d="M127 181.5l6.300-3.300 6.300 3.300-6.300 3.300z" fill="#f4f4f4" stroke="#a8a8a8" stroke-width=".6"/><path d="M127 179.5l6.300-3.300 6.300 3.300-6.300 3.300z" fill="#f4f4f4" stroke="#a8a8a8" stroke-width=".6"/><path d="M127 176.5l6.300-3.800 6.300 3.800-6.300 3.800z" fill="url(#fy)" stroke="#d8a800" stroke-width=".4"/><circle cx="136" cy="180.500" r="2.800" fill="#eef4f8" stroke="#333" stroke-width="1.100"/><path d="M138 182.700l3.600 3.600" stroke="#111" stroke-width="1.700"/><path d="M150 183.5l6.300-3.300 6.300 3.300-6.300 3.300z" fill="#f4f4f4" stroke="#a8a8a8" stroke-width=".6"/><path d="M150 181.5l6.300-3.300 6.300 3.300-6.300 3.300z" fill="#f4f4f4" stroke="#a8a8a8" stroke-width=".6"/><path d="M150 179.5l6.300-3.300 6.300 3.300-6.300 3.300z" fill="#f4f4f4" stroke="#a8a8a8" stroke-width=".6"/><path d="M150 176.5l6.300-3.800 6.300 3.800-6.300 3.800z" fill="#e4e4e4" stroke="#a8a8a8" stroke-width=".4"/><path d="M157.5 178.5v4.500h-2.300l3.600 4 3.600-4h-2.300v-4.500z" fill="#1a9ce8"/><rect x="172.500" y="175" width="12.500" height="10" rx="1" fill="#d8d8d8" stroke="#5a5a5a" stroke-width="1.200"/><path d="M173 178h12M173 181h9M176.500 178v7" stroke="#8a8a8a" stroke-width=".8"/><rect x="173" y="175.500" width="11.500" height="2" fill="#5a5a5a"/><g transform="translate(182.500 183.500)"><rect x="-1" y="-3.800" width="2" height="2.200" fill="#f4c818" transform="rotate(0)"/><rect x="-1" y="-3.800" width="2" height="2.200" fill="#f4c818" transform="rotate(45)"/><rect x="-1" y="-3.800" width="2" height="2.200" fill="#f4c818" transform="rotate(90)"/><rect x="-1" y="-3.800" width="2" height="2.200" fill="#f4c818" transform="rotate(135)"/><rect x="-1" y="-3.800" width="2" height="2.200" fill="#f4c818" transform="rotate(180)"/><rect x="-1" y="-3.800" width="2" height="2.200" fill="#f4c818" transform="rotate(225)"/><rect x="-1" y="-3.800" width="2" height="2.200" fill="#f4c818" transform="rotate(270)"/><rect x="-1" y="-3.800" width="2" height="2.200" fill="#f4c818" transform="rotate(315)"/><circle r="2.600" fill="#f4c818"/><circle r="1" fill="#c0a040"/></g><path d="M200.500 173.500l1.800 1.500-1.800 1.500zM204.500 173.500l1.800 1.500-1.800 1.500z" fill="#222"/><path d="M200.300 182.500h6" stroke="#222" stroke-width="1.100"/><path d="M200.300 184.500h6l-3 3.300z" fill="#222"/><path d="M201.300 189h5" stroke="#eee" stroke-width=".8"/><circle cx="13.500" cy="227.500" r="4.800" fill="#f2f2f2" stroke="#c4c4c4" stroke-width=".7"/><circle cx="9.500" cy="232.500" r="4.800" fill="#e0e0e0" stroke="#b0b0b0" stroke-width=".8"/><path d="M11.500 230.500l8 3-3 1 3.200 4-1.500 1-3-4-2 2.200z" fill="#f4c414" stroke="#c89800" stroke-width=".4"/><path d="M191.500 204.500l4 3.800 4-3.800M191.500 231.500l4 3.800 4-3.800" fill="none" stroke="#4a4a4a" stroke-width="1.100"/></svg><!--/ICONS3-->
<!--LEFT-->
<div class="a" style="left:0;top:142px;width:1162px;height:3px;background:linear-gradient(#707070,#6a6a6a 50%,#9a9a9a)"></div><div class="a" style="left:0;top:47px;width:1px;height:95px;background:#6c6c6c"></div>
<div id="ctab" class="a"></div><div class="a" style="left:209px;top:145px;width:953px;height:1px;background:#b4b4b4"></div>
<div class="dt" style="left:219px;width:85px;background:linear-gradient(#f6f8fc,#dde6f3)"><span class="a" style="left:2px;color:#6a6a72">Start Page</span></div>
<div class="dt" style="left:304px;width:133px;background:linear-gradient(#d4e2f3,#c3d6ed 46%,#a8c3e3 54%,#b6cde9);border-right:1px solid #000"><span class="a" style="left:3px;color:#000">Plan View [My Filter]</span></div>
<svg class="a" style="left:286px;top:155px" width="9" height="8"><path d="M1 .5L8 7.5M8 .5L1 7.5" stroke="#6a6a6a" stroke-width="2"/></svg>
<svg class="a" style="left:420.500px;top:154.500px" width="10" height="8"><path d="M1 .5L8.800 7.500M8.800 .5L1 7.500" stroke="#0a0a0a" stroke-width="2.600"/></svg>
<div class="a" style="left:215px;top:169px;width:636px;height:1px;background:#bdd0ea"></div><div class="a" style="left:215px;top:170px;width:636px;height:1px;background:#e6eef8"></div>
<svg id="cv" class="a" width="636" height="507" viewBox="215 171 636 507" style="font-family:'Liberation Sans',sans-serif;font-size:12px"><path d="M245.5 174.5V678" stroke="#adadad" stroke-width="1" stroke-dasharray="15.5 4 2.5 3.55 2.5 4"/><path d="M454.5 174.5V678" stroke="#adadad" stroke-width="1" stroke-dasharray="15.5 4 2.5 3.55 2.5 4"/><path d="M662.5 174.5V678" stroke="#adadad" stroke-width="1" stroke-dasharray="15.5 4 2.5 3.55 2.5 4"/><path d="M214.5 335.5H851" stroke="#adadad" stroke-width="1" stroke-dasharray="15.5 4 2.5 3.55 2.5 4"/><path d="M214.5 544.5H851" stroke="#adadad" stroke-width="1" stroke-dasharray="15.5 4 2.5 3.55 2.5 4"/><text x="219.4" y="331.5" fill="#bcbcbc">1100</text><text x="219.4" y="540.5" fill="#bcbcbc">1000</text><path d="M454.5 544.5L662.5 335.5" stroke="#ffa500" stroke-width="1.2"/><path d="M578.5 419L662.8 334.6" stroke="#ffa500" stroke-width="2"/><circle cx="454.5" cy="544" r="3.6" fill="#7c7cff"/><circle cx="662.5" cy="335" r="3" fill="none" stroke="#6c6cf0" stroke-width="1"/><text x="464" y="540.5" fill="#fff">1</text><text x="464" y="555.5" fill="#fff">100.000</text><text x="672.3" y="331.5" fill="#fff">2</text><text x="672.3" y="346.5" fill="#fff">110.000</text><text transform="translate(456,554.5) rotate(45)" fill="#8c8cff" font-style="italic" letter-spacing=".3">100.000</text><text transform="translate(664,345.5) rotate(45)" fill="#8c8cff" font-style="italic" letter-spacing=".3">110.000</text></svg>
<!--CENTER-->
<div id="rp" class="a"></div><div id="rpi" class="a"></div>
<div class="a" style="left:851px;top:146px;width:311px;height:6px;background:#fff"></div>
<div class="a" style="left:855px;top:152px;width:304px;height:27px;background:linear-gradient(#f0f0f0,#e6e6e6 35%,#d0d0d0)"></div>
<div class="t" style="left:882px;top:161px;font-size:11px">Break Line</div>
<svg class="a" style="left:1141px;top:163px" width="9" height="9"><path d="M1 1L7.600 7.600M7.600 1L1 7.600" stroke="#080808" stroke-width="2.500"/></svg>
<div class="a" style="left:855px;top:179px;width:304px;height:24px;background:#626262"></div>
<div class="a" style="left:855px;top:180px;width:94px;height:23px;background:linear-gradient(#c8c8c8,#b2b2b2);border-radius:3px"></div>
<div class="a" style="left:859px;top:207px;width:296px;height:323px;background:#d0d0d0"></div>
<div class="a" style="left:862px;top:210px;width:290px;height:314px;background:#e4e4e4"></div>
<div class="t" style="left:868px;top:213px;font-size:11px">Line:</div>
<div class="inp" style="top:229px"><span class="a" style="left:2.500px;letter-spacing:-.4px">Linestring</span></div>
<div class="t" style="left:868px;top:252px;font-size:11px">Distance along:</div>
<div class="inp" style="top:268px;border-color:#0a78d7"><span class="a" style="left:3px">50</span></div>
<svg class="a" style="left:1139.5px;top:271.5px" width="9" height="14"><path d="M7.8 .8V12.600L1 6.700Z" fill="#e8262c" stroke="#8a1010" stroke-width=".8"/></svg>
<!--ICONS4--><svg class="a" style="left:851px;top:150px" width="311" height="150" viewBox="851 150 311 150"><defs><linearGradient id="ry" x1="0" y1="0" x2="0" y2="1"><stop offset="0" stop-color="#ffe45a"/><stop offset="1" stop-color="#f2b600"/></linearGradient></defs><path d="M858.200 166.900h4M867 166.900h3.200" stroke="#f8f8f8" stroke-width="1.300"/><path d="M863 163.300v7.300M866.200 163.300v7.300" stroke="#3a3a3a" stroke-width="1.300"/><circle cx="858.300" cy="166.900" r="1.800" fill="#f6c814"/><circle cx="870.200" cy="166.900" r="1.800" fill="#f6c814"/><rect x="858.4" y="184.6" width="2" height="2" fill="#1a1a1a"/><rect x="858.4" y="188.2" width="2" height="2" fill="#1a1a1a"/><rect x="858.4" y="191.79999999999998" width="2" height="2" fill="#1a1a1a"/><rect x="858.4" y="195.4" width="2" height="2" fill="#1a1a1a"/><path d="M858.4 198.600l1 1" stroke="#1a1a1a" stroke-width="1"/><rect x="919.4" y="184.6" width="2" height="2" fill="#1a1a1a"/><rect x="919.4" y="188.2" width="2" height="2" fill="#1a1a1a"/><rect x="919.4" y="191.79999999999998" width="2" height="2" fill="#1a1a1a"/><rect x="919.4" y="195.4" width="2" height="2" fill="#1a1a1a"/><path d="M919.4 198.600l1 1" stroke="#1a1a1a" stroke-width="1"/><path d="M869 187.500h14l-7 7z" fill="#bcbcbc" stroke="#b0b0b0" stroke-width=".5"/><path d="M889.500 183v13" stroke="#666"/><path d="M890.500 183v13" stroke="#d4d4d4"/><rect x="898.500" y="185.500" width="11.500" height="10.500" fill="#141414" stroke="#e0c020" stroke-width="1.300"/><path d="M900.500 188l1.600 1-1.600 1M903 190.800h2.500" stroke="#bbb" stroke-width=".8" fill="none"/><path d="M932.500 195L941.500 186.500" stroke="#f6c414" stroke-width="4"/><path d="M939.800 188.100L941.800 186.200" stroke="#f6f2e6" stroke-width="4"/><path d="M931.200 196.200l.4-2.600 2.400 2.400z" fill="#e8d8a0"/><path d="M931.200 196.200l.3-1 .8.800z" fill="#333"/><path d="M870.500 230v14.500l3.500-3.200 2.600 6 2.600-1.200-2.600-5.800h4.600z" fill="#fcfcfc" stroke="#1c3866" stroke-width="1.100" stroke-linejoin="round"/><rect x="865.300" y="269.500" width="3.600" height="18" fill="#8ccc20"/><rect x="868.900" y="284" width="14.600" height="3.400" fill="#18b4e8"/><path d="M869.500 283.500c5-1 7-5 8-8s2-4 4-4.500" fill="none" stroke="#111" stroke-width="1.600"/><circle cx="876.500" cy="276.700" r="1.900" fill="#e81818"/><path d="M976.500 276v14.500M973.500 275.500h2.200l.8.800.8-.8h2.200M973.500 291h2.200l.8-.8.800.8h2.200" stroke="#111" stroke-width="1" fill="none"/></svg><!--/ICONS4-->
<!--RIGHT-->
</body></html>
